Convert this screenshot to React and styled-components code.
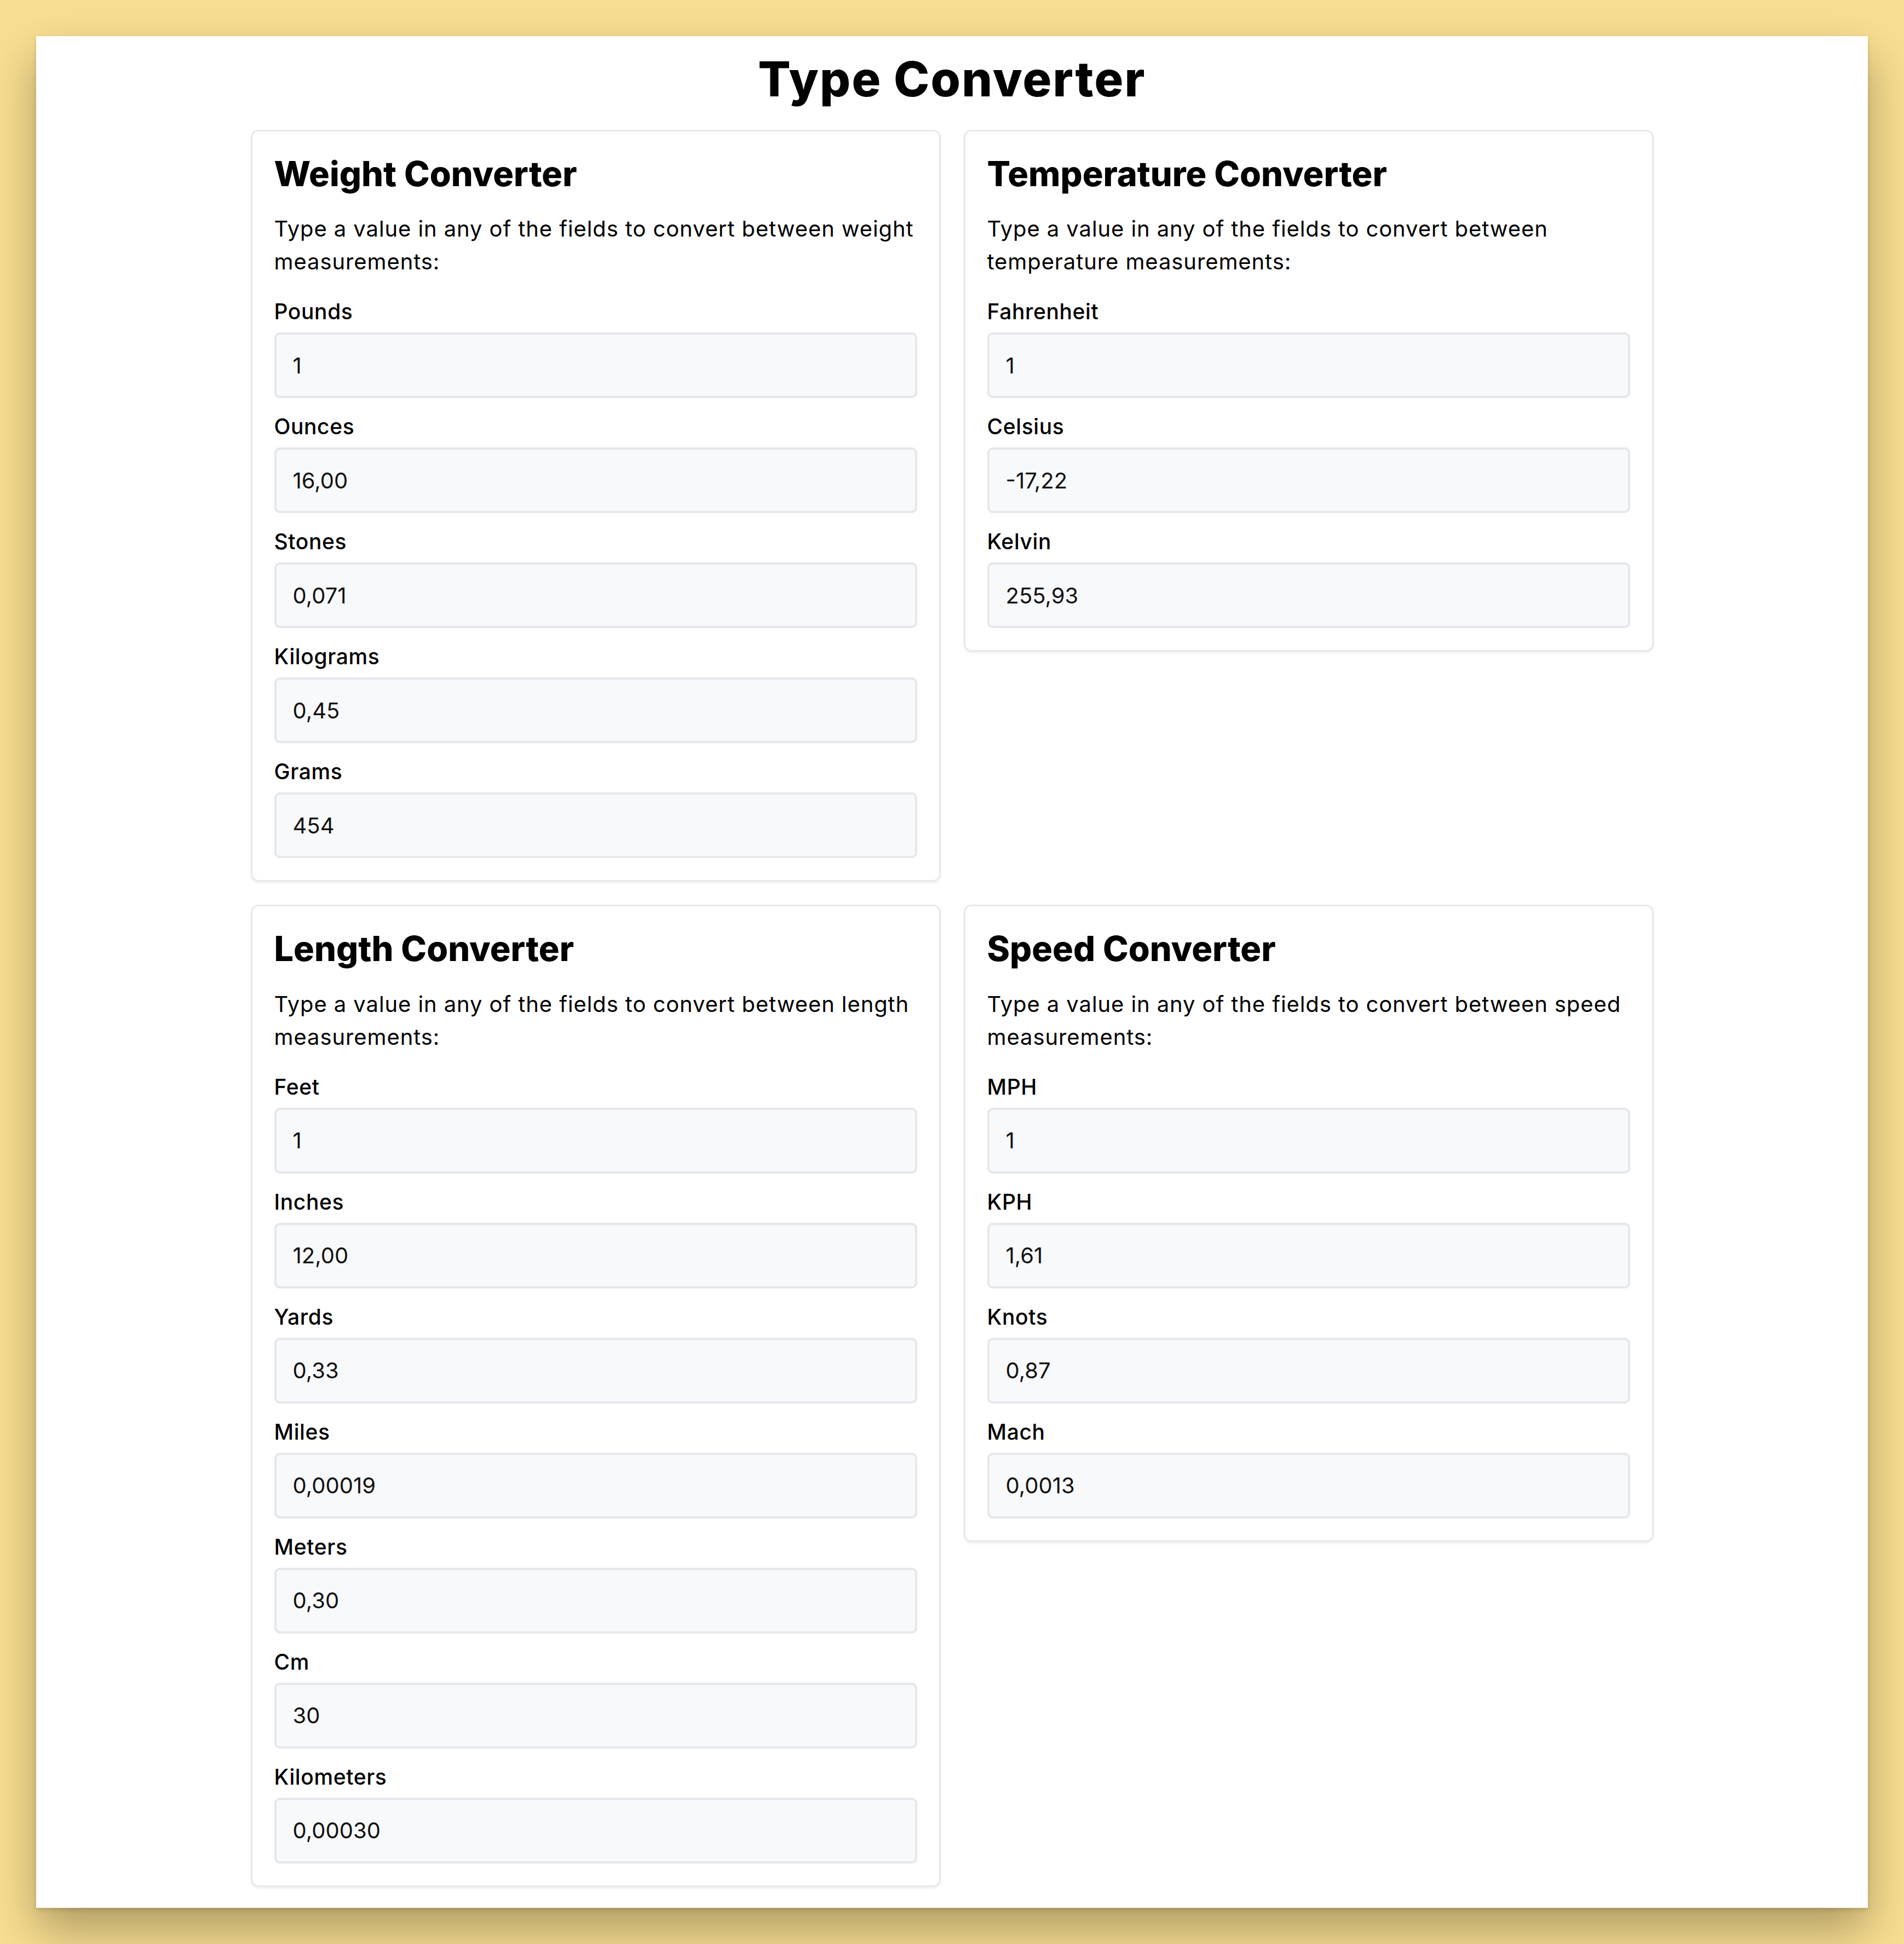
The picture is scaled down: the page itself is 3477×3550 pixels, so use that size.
import React from 'react';
import styled, { createGlobalStyle } from 'styled-components';

const GlobalStyle = createGlobalStyle`
  *, *::before, *::after {
    box-sizing: border-box;
  }

  body {
    margin: 0;
    padding: 66px;
    background: #f8de90;
    font-family: Inter, "Noto Sans", "Liberation Sans", sans-serif;
    color: #000;
  }
`;

const Page = styled.main`
  background: #fff;
  padding: 26px 0 38px;
  box-shadow: 0 4px 8px rgba(0, 0, 0, 0.12), 0 40px 80px rgba(0, 0, 0, 0.3);
`;

const Title = styled.h1`
  margin: 0 0 39px;
  font-size: 88px;
  line-height: 1.2;
  font-weight: 800;
  letter-spacing: 2.2px;
  text-align: center;
`;

const Grid = styled.div`
  max-width: 2562px;
  margin: 0 auto;
  display: grid;
  grid-template-columns: 1fr 1fr;
  gap: 42px;
  align-items: start;
`;

const Card = styled.section`
  background: #fff;
  border: 3px solid #e8e8ed;
  border-radius: 14px;
  padding: 40px;
  box-shadow: 0 3px 4px rgba(0, 0, 0, 0.06);
`;

const Heading = styled.h2`
  margin: 0 0 33px;
  font-size: 63px;
  line-height: 1.2;
  font-weight: 800;
  letter-spacing: 0;
`;

const Intro = styled.p`
  margin: 0 0 31px;
  font-size: 40px;
  line-height: 60px;
  font-weight: 400;
  letter-spacing: 0.9px;
`;

const Fields = styled.div`
  display: flex;
  flex-direction: column;
  gap: 22px;
`;

const Field = styled.div`
  display: flex;
  flex-direction: column;
  gap: 8px;
`;

const Label = styled.label`
  font-size: 39px;
  line-height: 60px;
  font-weight: 500;
  letter-spacing: 0.6px;
`;

const Input = styled.input`
  width: 100%;
  height: 120px;
  padding: 0 30px;
  border: 4px solid #e5e7eb;
  border-radius: 10px;
  background: #f8f9fb;
  font-family: inherit;
  font-size: 40px;
  color: #111;
  outline: none;
`;

const converters = [
  {
    title: 'Weight Converter',
    kind: 'weight',
    fields: [
      ['Pounds', '1'],
      ['Ounces', '16,00'],
      ['Stones', '0,071'],
      ['Kilograms', '0,45'],
      ['Grams', '454'],
    ],
  },
  {
    title: 'Temperature Converter',
    kind: 'temperature',
    fields: [
      ['Fahrenheit', '1'],
      ['Celsius', '-17,22'],
      ['Kelvin', '255,93'],
    ],
  },
  {
    title: 'Length Converter',
    kind: 'length',
    fields: [
      ['Feet', '1'],
      ['Inches', '12,00'],
      ['Yards', '0,33'],
      ['Miles', '0,00019'],
      ['Meters', '0,30'],
      ['Cm', '30'],
      ['Kilometers', '0,00030'],
    ],
  },
  {
    title: 'Speed Converter',
    kind: 'speed',
    fields: [
      ['MPH', '1'],
      ['KPH', '1,61'],
      ['Knots', '0,87'],
      ['Mach', '0,0013'],
    ],
  },
];

function Converter({ title, kind, fields }) {
  return (
    <Card>
      <Heading>{title}</Heading>
      <Intro>Type a value in any of the fields to convert between {kind} measurements:</Intro>
      <Fields>
        {fields.map(([label, value]) => {
          const id = `${kind}-${label.toLowerCase()}`;
          return (
            <Field key={label}>
              <Label htmlFor={id}>{label}</Label>
              <Input id={id} type="text" defaultValue={value} />
            </Field>
          );
        })}
      </Fields>
    </Card>
  );
}

export default function App() {
  return (
    <>
      <GlobalStyle />
      <Page>
        <Title>Type Converter</Title>
        <Grid>
          {converters.map((c) => (
            <Converter key={c.kind} {...c} />
          ))}
        </Grid>
      </Page>
    </>
  );
}
